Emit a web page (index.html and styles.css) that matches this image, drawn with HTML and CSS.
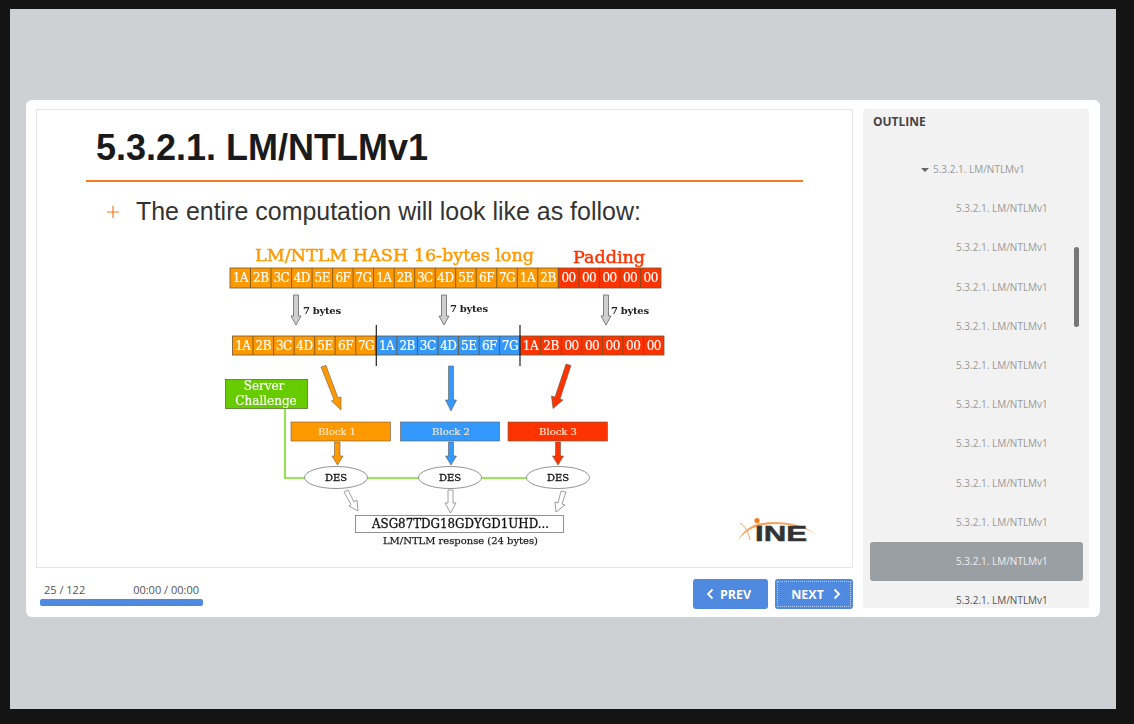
FILE: index.html
```html
<html>
<head>
  <meta charset="utf-8" />
  <title>5.3.2.1. LM/NTLMv1</title>
  <link rel="stylesheet" href="styles.css">
</head>
<body>

<div class="stage">
  <div class="card">

    <div class="main">
      <div class="slide">
        <h1 class="slideTitle">5.3.2.1. LM/NTLMv1</h1>
        <div class="bullet">
          <svg class="plus" width="12" height="12" viewBox="0 0 12 12"><path d="M6 0V12M0 6H12" /></svg>
          The entire computation will look like as follow:
        </div>

        <svg class="diagram" width="460" height="310" viewBox="215 240 460 310">
          <defs>
            <polygon id="arrow" points="-2.5,0 2.5,0 2.5,21 5,21 0,30 -5,21 -2.5,21" />
          </defs>

          <text class="heading orange" x="255" y="261" textLength="279" lengthAdjust="spacingAndGlyphs">LM/NTLM HASH 16-bytes long</text>
          <text class="heading red" x="573" y="263" textLength="72" lengthAdjust="spacingAndGlyphs">Padding</text>

          <!-- top row -->
          <rect class="band fillOrange" x="230" y="268" width="328.3" height="20" />
          <rect class="band fillRed" x="558.3" y="268" width="102.7" height="20" />
          <path class="cellLines" d="M250.5 268v20M271 268v20M291.6 268v20M312.1 268v20M332.6 268v20M353.1 268v20M373.6 268v20M394.2 268v20M414.7 268v20M435.2 268v20M455.7 268v20M476.2 268v20M496.8 268v20M517.3 268v20M537.8 268v20M578.8 268v20M599.4 268v20M619.9 268v20M640.4 268v20" />
          <g class="cellText">
            <text x="240.3" y="282">1A</text><text x="260.8" y="282">2B</text><text x="281.3" y="282">3C</text><text x="301.8" y="282">4D</text><text x="322.3" y="282">5E</text><text x="342.9" y="282">6F</text><text x="363.4" y="282">7G</text>
            <text x="383.9" y="282">1A</text><text x="404.4" y="282">2B</text><text x="424.9" y="282">3C</text><text x="445.5" y="282">4D</text><text x="466" y="282">5E</text><text x="486.5" y="282">6F</text><text x="507" y="282">7G</text>
            <text x="527.5" y="282">1A</text><text x="548.1" y="282">2B</text>
            <text x="568.6" y="282">00</text><text x="589.1" y="282">00</text><text x="609.6" y="282">00</text><text x="630.1" y="282">00</text><text x="650.7" y="282">00</text>
          </g>

          <!-- 7 bytes arrows -->
          <use class="grayArrow" href="#arrow" x="296" y="295" />
          <use class="grayArrow" href="#arrow" x="444" y="295" />
          <use class="grayArrow" href="#arrow" x="606" y="295" />
          <text class="small" x="303" y="314">7 bytes</text>
          <text class="small" x="450" y="312">7 bytes</text>
          <text class="small" x="611" y="314">7 bytes</text>

          <!-- second row -->
          <rect class="band fillOrange" x="232.5" y="336" width="143.5" height="19" />
          <rect class="band fillBlue" x="376" y="336" width="144" height="19" />
          <rect class="band fillRed" x="520" y="336" width="144" height="19" />
          <path class="cellLines" d="M253 336v19M273.6 336v19M294.1 336v19M314.7 336v19M335.2 336v19M355.8 336v19M396.9 336v19M417.4 336v19M438 336v19M458.5 336v19M479.1 336v19M499.6 336v19M540.7 336v19M561.3 336v19M581.8 336v19M602.4 336v19M622.9 336v19M643.5 336v19" />
          <g class="cellText">
            <text x="242.8" y="350">1A</text><text x="263.3" y="350">2B</text><text x="283.9" y="350">3C</text><text x="304.4" y="350">4D</text><text x="325" y="350">5E</text><text x="345.5" y="350">6F</text><text x="366.1" y="350">7G</text>
            <text x="386.6" y="350">1A</text><text x="407.2" y="350">2B</text><text x="427.7" y="350">3C</text><text x="448.3" y="350">4D</text><text x="468.8" y="350">5E</text><text x="489.4" y="350">6F</text><text x="509.9" y="350">7G</text>
            <text x="530.5" y="350">1A</text><text x="551" y="350">2B</text><text x="571.6" y="350">00</text><text x="592.1" y="350">00</text><text x="612.7" y="350">00</text><text x="633.2" y="350">00</text><text x="653.8" y="350">00</text>
          </g>
          <path class="divider" d="M376.3 325v41M520 325v41" />

          <!-- arrows down to the blocks -->
          <polygon class="fillOrange edge" points="321,367 326,365.5 338,398 341,397 341,410 331.5,401 334,399.5" />
          <polygon class="fillBlue edge" points="448.5,366 453.5,366 453.5,400 456.5,400 451,411 445.5,400 448.5,400" />
          <polygon class="fillRed edge" points="566,364 571,365.5 560,399 563,400 553,408.5 551.5,396 555,397" />

          <!-- green line behind the DES ovals -->
          <path class="greenLine" d="M285 409V478H540" />
          <rect class="serverBox" x="225.5" y="379.5" width="82" height="29" />
          <text class="boxText" x="264" y="390">Server</text>
          <text class="boxText" x="266" y="405">Challenge</text>

          <rect class="fillOrange edge" x="291" y="422" width="99.5" height="19" />
          <rect class="fillBlue edge" x="400.5" y="422" width="99" height="19" />
          <rect class="fillRed edge" x="508" y="422" width="99.5" height="19" />
          <text class="blockText" x="337" y="435">Block 1</text>
          <text class="blockText" x="451" y="435">Block 2</text>
          <text class="blockText" x="558" y="435">Block 3</text>

          <polygon class="fillOrange edge" points="334.5,442 340,442 340,456 343,456 337.5,465 332,456 334.5,456" />
          <polygon class="fillBlue edge" points="448.5,442 453.5,442 453.5,456 456.5,456 451,465 445.5,456 448.5,456" />
          <polygon class="fillRed edge" points="555.5,442 560.5,442 560.5,456 563.5,456 558,465 552.5,456 555.5,456" />

          <ellipse class="oval" cx="336" cy="477.5" rx="31.5" ry="11" />
          <ellipse class="oval" cx="450" cy="477.5" rx="31.5" ry="11" />
          <ellipse class="oval" cx="558" cy="477.5" rx="31.5" ry="11" />
          <text class="desText" x="336" y="481">DES</text>
          <text class="desText" x="450" y="481">DES</text>
          <text class="desText" x="558" y="481">DES</text>

          <polygon class="hollow" points="344,492 348,490 354,502 357,500 358,511 349,506 351,504.5" />
          <polygon class="hollow" points="448,490 453,490 453,503 456,503 450.5,513 445,503 448,503" />
          <polygon class="hollow" points="561,491 566,492 562,504 565,505 556,512 555,502 558,503" />

          <rect class="resultBox" x="355.5" y="515.5" width="208" height="17" />
          <text class="resultText" x="372" y="528" textLength="177" lengthAdjust="spacingAndGlyphs">ASG87TDG18GDYGD1UHD...</text>
          <text class="caption" x="383" y="544" textLength="155" lengthAdjust="spacingAndGlyphs">LM/NTLM response (24 bytes)</text>
        </svg>

        <svg class="logo" width="82" height="36" viewBox="0 0 82 36">
          <path class="swoosh" d="M2 26C8 16 16 10 26 9C44 6 68 10 79 20C68 12 44 8 28 11C16 13 9 18 2 26Z" />
          <path class="swooshThin" d="M4 9C9 12 13 19 14 26" />
          <circle class="logoDot" cx="21" cy="6.5" r="2.6" />
          <text class="logoText" x="19" y="27" textLength="52" lengthAdjust="spacingAndGlyphs">INE</text>
        </svg>
      </div>

      <div class="controls">
        <div class="progressBox">
          <div class="progressInfo">
            <span>25 / 122</span>
            <span>00:00 / 00:00</span>
          </div>
          <div class="progressBar"></div>
        </div>
        <div class="buttons">
          <button class="navBtn prev">
            <svg width="8" height="12" viewBox="0 0 8 12"><path d="M6.5 1.5L2 6L6.5 10.5" /></svg>
            PREV
          </button>
          <button class="navBtn next">
            NEXT
            <svg width="8" height="12" viewBox="0 0 8 12"><path d="M1.5 1.5L6 6L1.5 10.5" /></svg>
          </button>
        </div>
      </div>
    </div>

    <div class="outline">
      <div class="outlineTitle">OUTLINE</div>
      <div class="scrollThumb"></div>
      <ul class="outlineList">
        <li class="item top"><span class="caret"></span>5.3.2.1. LM/NTLMv1</li>
        <li class="item">5.3.2.1. LM/NTLMv1</li>
        <li class="item">5.3.2.1. LM/NTLMv1</li>
        <li class="item">5.3.2.1. LM/NTLMv1</li>
        <li class="item">5.3.2.1. LM/NTLMv1</li>
        <li class="item">5.3.2.1. LM/NTLMv1</li>
        <li class="item">5.3.2.1. LM/NTLMv1</li>
        <li class="item">5.3.2.1. LM/NTLMv1</li>
        <li class="item">5.3.2.1. LM/NTLMv1</li>
        <li class="item">5.3.2.1. LM/NTLMv1</li>
        <li class="item selected">5.3.2.1. LM/NTLMv1</li>
        <li class="item upcoming">5.3.2.1. LM/NTLMv1</li>
      </ul>
    </div>

  </div>
</div>

</body>
</html>
```

FILE: styles.css
```css
html, body {
  margin: 0;
  height: 724px;
  overflow: hidden;
  background: #141414;
}

.stage {
  box-sizing: border-box;
  margin: 9px 18px 0 10px;
  height: 700px;
  padding: 91px 16px 0 16px;
  background: #cdd1d4;
}

.card {
  display: flex;
  gap: 10px;
  box-sizing: border-box;
  width: 1074px;
  height: 517px;
  padding: 9px 11px 9px 10px;
  background: #fff;
  border-radius: 6px;
}

.main {
  width: 817px;
}

/* the slide */
.slide {
  position: relative;
  box-sizing: border-box;
  height: 459px;
  border: 1px solid #e6e6e6;
  overflow: hidden;
}

.slideTitle {
  box-sizing: border-box;
  width: 717px;
  height: 72px;
  margin: 0 0 0 49px;
  padding: 17px 0 0 10px;
  border-bottom: 2px solid #f47b20;
  font: bold 36px/42px "Liberation Sans", Arial, sans-serif;
  color: #1a1a1a;
}

.bullet {
  display: flex;
  align-items: center;
  margin: 14px 0 0 70px;
  font: 24.96px/30px "Liberation Sans", Arial, sans-serif;
  color: #333;
}

.plus {
  margin: 2px 17px 0 0;
}

.plus path {
  fill: none;
  stroke: #f47b20;
  stroke-width: 1.2;
}

.diagram {
  display: block;
  margin: 14px 0 0 178px;
  filter: blur(0.45px);
}

.heading {
  font: 16px "DejaVu Serif", serif;
  stroke-width: 0.45;
}
.orange { fill: #ff9900; stroke: #ff9900; }
.red { fill: #ff3300; stroke: #ff3300; }

.fillOrange { fill: #ff9900; }
.fillBlue { fill: #3399ff; }
.fillRed { fill: #ff3300; }

.band {
  stroke: #6e5430;
  stroke-width: 0.8;
}

.edge {
  stroke: #6b5a4a;
  stroke-width: 0.6;
}

.cellLines {
  fill: none;
  stroke: #6b5020;
  stroke-width: 0.8;
}

.cellText text {
  font: 12px "DejaVu Serif", serif;
  fill: #fff;
  stroke: #fff;
  stroke-width: 0.2;
  text-anchor: middle;
  letter-spacing: -0.5px;
}

.grayArrow {
  fill: #cfcfcf;
  stroke: #666;
  stroke-width: 0.8;
}

.small {
  font: bold 10px "DejaVu Serif", serif;
  fill: #222;
  letter-spacing: -0.3px;
}

.divider {
  fill: none;
  stroke: #222;
  stroke-width: 1.2;
}

.greenLine {
  fill: none;
  stroke: #77dd22;
  stroke-width: 1.6;
}

.serverBox {
  fill: #66cc00;
  stroke: #557733;
  stroke-width: 0.8;
}

.boxText {
  font: 12px "DejaVu Serif", serif;
  fill: #fff;
  stroke: #fff;
  stroke-width: 0.2;
  text-anchor: middle;
}

.blockText {
  font: 10px "DejaVu Serif", serif;
  fill: #ffe9d0;
  stroke: #ffe9d0;
  stroke-width: 0.15;
  text-anchor: middle;
}

.oval {
  fill: #fff;
  stroke: #777;
  stroke-width: 0.8;
}

.desText {
  font: 10px "DejaVu Serif", serif;
  fill: #111;
  stroke: #111;
  stroke-width: 0.3;
  text-anchor: middle;
}

.hollow {
  fill: #fff;
  stroke: #888;
  stroke-width: 0.8;
}

.resultBox {
  fill: #fff;
  stroke: #777;
  stroke-width: 0.8;
}

.resultText {
  font: 12px "DejaVu Serif", serif;
  fill: #111;
  stroke: #111;
  stroke-width: 0.3;
}

.caption {
  font: 10px "DejaVu Serif", serif;
  fill: #222;
  stroke: #222;
  stroke-width: 0.25;
}

/* logo sits over the slide corner */
.logo {
  position: absolute;
  right: 34px;
  bottom: 17px;
}

.swoosh { fill: #f7a35c; }
.swooshThin {
  fill: none;
  stroke: #f7a35c;
  stroke-width: 1;
}
.logoDot { fill: #f47b20; }
.logoText {
  font: bold 22.5px "Liberation Sans", Arial, sans-serif;
  fill: #333;
  stroke: #333;
  stroke-width: 0.5;
}

/* under the slide */
.controls {
  display: flex;
  justify-content: space-between;
  padding-top: 11px;
}

.progressBox {
  width: 163px;
  margin: 3px 0 0 4px;
}

.progressInfo {
  display: flex;
  justify-content: space-between;
  padding: 0 4px;
  font: 11px/15px "Open Sans", sans-serif;
  color: #555;
}

.progressBar {
  height: 6.5px;
  margin-top: 2px;
  background: #5089e0;
  border-radius: 2px;
}

.buttons {
  display: flex;
  gap: 7px;
}

.navBtn {
  display: flex;
  align-items: center;
  justify-content: center;
  height: 30px;
  padding: 0;
  border: 0;
  border-radius: 3px;
  background: #5089e0;
  font: bold 12.5px "Open Sans", sans-serif;
  color: #fff;
}

.navBtn svg path {
  fill: none;
  stroke: #fff;
  stroke-width: 1.8;
}

.prev {
  width: 75px;
  gap: 6px;
  padding-right: 4px;
}
.next {
  width: 78px;
  gap: 9px;
  padding-left: 4px;
  outline: 1px dotted #b4cdf3;
  outline-offset: -3px;
}

/* outline sidebar */
.outline {
  position: relative;
  box-sizing: border-box;
  width: 226px;
  height: 499px;
  background: #f2f2f2;
  border-radius: 3px;
  overflow: hidden;
}

.outlineTitle {
  padding: 4px 0 0 10px;
  font: bold 12px/17px "Open Sans", sans-serif;
  color: #444;
}

.scrollThumb {
  position: absolute;
  left: 211px;
  top: 138px;
  width: 5px;
  height: 80px;
  background: #777;
  border-radius: 3px;
}

.outlineList {
  list-style: none;
  margin: 20px 0 0 7px;
  padding: 0;
  width: 213px;
}

.item {
  box-sizing: border-box;
  height: 39.2px;
  padding-left: 86px;
  font: 10px/39px "Open Sans", sans-serif;
  color: #999;
  border-radius: 3px;
}

.top {
  padding-left: 51px;
}

.caret {
  display: inline-block;
  width: 0;
  height: 0;
  margin-right: 4px;
  vertical-align: 1px;
  border: 4.5px solid transparent;
  border-top: 4px solid #666;
  border-bottom: 0;
}

.selected {
  background: #9a9fa3;
  color: #eee;
}

.upcoming {
  color: #555;
}
```
